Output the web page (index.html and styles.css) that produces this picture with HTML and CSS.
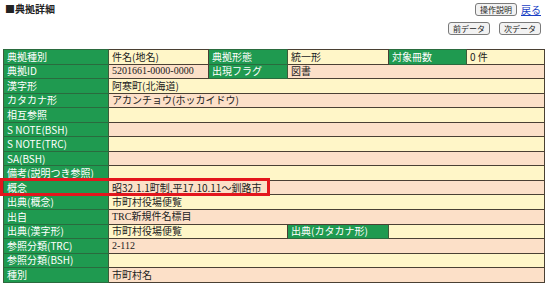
FILE: index.html
```html
<!DOCTYPE html>
<html lang="ja">
<head>
    <meta charset="UTF-8">
    <title>典拠詳細</title>
    <link rel="stylesheet" href="styles.css">
</head>
<body>
    <div class="top">
        <div class="title">■典拠詳細</div>
        <div class="tools">
            <div class="tool-row">
                <button class="btn">操作説明</button>
                <a href="#" class="back">戻る</a>
            </div>
            <div class="tool-row">
                <button class="btn">前データ</button>
                <button class="btn">次データ</button>
            </div>
        </div>
    </div>

    <div class="detail-wrap">
        <table class="detail">
            <colgroup>
                <col class="c1"><col class="c2"><col class="c3"><col class="c4"><col class="c5"><col class="c6">
            </colgroup>
            <tr class="odd">
                <th>典拠種別</th><td>件名(地名)</td>
                <th>典拠形態</th><td>統一形</td>
                <th>対象冊数</th><td>0 件</td>
            </tr>
            <tr class="even">
                <th>典拠ID</th><td class="num">5201661-0000-0000</td>
                <th>出現フラグ</th><td colspan="3">図書</td>
            </tr>
            <tr class="odd"><th>漢字形</th><td colspan="5">阿寒町(北海道)</td></tr>
            <tr class="even"><th>カタカナ形</th><td colspan="5">アカンチョウ(ホッカイドウ)</td></tr>
            <tr class="odd"><th>相互参照</th><td colspan="5"></td></tr>
            <tr class="even"><th>S NOTE(BSH)</th><td colspan="5"></td></tr>
            <tr class="odd"><th>S NOTE(TRC)</th><td colspan="5"></td></tr>
            <tr class="even"><th>SA(BSH)</th><td colspan="5"></td></tr>
            <tr class="odd"><th>備考(説明つき参照)</th><td colspan="5"></td></tr>
            <tr class="even"><th>概念</th><td colspan="5">昭32.1.1町制,平17.10.11〜釧路市</td></tr>
            <tr class="odd"><th>出典(概念)</th><td colspan="5">市町村役場便覧</td></tr>
            <tr class="even"><th>出自</th><td colspan="5" class="num">TRC新規件名標目</td></tr>
            <tr class="odd">
                <th>出典(漢字形)</th><td colspan="2">市町村役場便覧</td>
                <th>出典(カタカナ形)</th><td colspan="2"></td>
            </tr>
            <tr class="even"><th>参照分類(TRC)</th><td colspan="5" class="num">2-112</td></tr>
            <tr class="odd"><th>参照分類(BSH)</th><td colspan="5"></td></tr>
            <tr class="even"><th>種別</th><td colspan="5">市町村名</td></tr>
        </table>
        <div class="mark"></div>
    </div>
</body>
</html>
```

FILE: styles.css
```css
body {
    margin: 0;
    font-family: "Noto Sans CJK JP", sans-serif;
    font-size: 10px;
    color: #222;
    background-color: #fff;
}
.top {
    display: flex;
    justify-content: space-between;
    align-items: flex-start;
    padding: 2px 19px 0 5px;
    height: 47px;
}
.title {
    font-weight: bold;
    font-size: 10px;
    line-height: 14px;
}
.tools {
    display: flex;
    flex-direction: column;
    align-items: flex-end;
    gap: 5px;
}
.tool-row {
    display: flex;
    align-items: center;
    gap: 9px;
}
.tool-row:first-child {
    gap: 4px;
}
.btn {
    font-family: "Noto Sans CJK JP", sans-serif;
    font-size: 8px;
    line-height: 11px;
    padding: 0 4px;
    height: 13px;
    background-color: #f2f2f2;
    border: 1px solid #7a7a7a;
    border-radius: 3px;
    color: #222;
}
.back {
    color: #1a3fc4;
    font-size: 10px;
    text-decoration: underline;
}

/* 詳細テーブル */
.detail-wrap {
    position: relative;
    margin-left: 3px;
    width: 541px;
}
.detail {
    width: 541px;
    table-layout: fixed;
    border-collapse: collapse;
    border: 1px solid #4a4033;
}
.c1 { width: 105px; }
.c2 { width: 100px; }
.c3 { width: 79px; }
.c4 { width: 101px; }
.c5 { width: 78px; }
.c6 { width: 78px; }
.detail tr {
    height: 14.56px;
}
.detail th, .detail td {
    border: 1px solid #4a4033;
    padding: 0 3px;
    font-size: 10px;
    line-height: 12px;
    text-align: left;
    white-space: nowrap;
    overflow: hidden;
}
.detail th {
    background-color: #1f9a50;
    color: #fff;
    font-weight: normal;
    border-color: #2a6b3e #3d5b3a;
}
.detail .odd td {
    background-color: #fff6c8;
}
.detail .even td {
    background-color: #fce0c8;
}
.detail td.num {
    font-family: "Liberation Serif", "Noto Sans CJK JP", serif;
}
.mark {
    position: absolute;
    left: -3px;
    top: 129px;
    width: 264px;
    height: 12px;
    border: 3px solid #e3161d;
}
```
